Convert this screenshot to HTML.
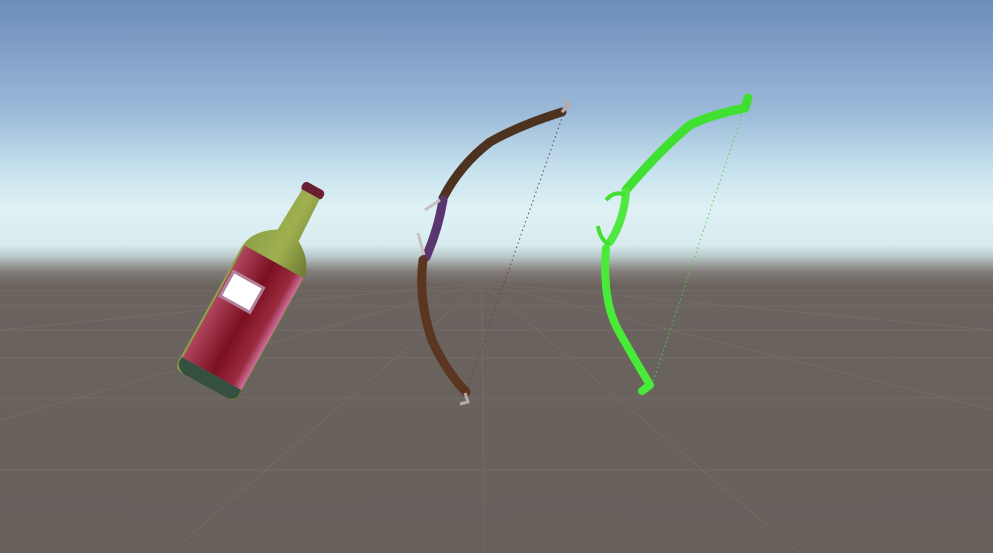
<!DOCTYPE html>
<html><head><meta charset="utf-8"><style>
html,body{margin:0;padding:0;width:993px;height:553px;overflow:hidden;background:#67605b}
</style></head><body>
<svg width="993" height="553" viewBox="0 0 993 553" xmlns="http://www.w3.org/2000/svg">
<defs>
<linearGradient id="sky" x1="0" y1="0" x2="0" y2="1">
<stop offset="0" stop-color="#6c8cba"/>
<stop offset="0.45" stop-color="#9ab9d8"/>
<stop offset="0.7" stop-color="#c8e3ee"/>
<stop offset="0.85" stop-color="#dff1f4"/>
<stop offset="1" stop-color="#d8ebee"/>
</linearGradient>
<linearGradient id="haze" x1="0" y1="0" x2="0" y2="1">
<stop offset="0" stop-color="#d8ebee"/>
<stop offset="0.3" stop-color="#b8c6c8"/>
<stop offset="0.65" stop-color="#847e7b"/>
<stop offset="1" stop-color="#6a635e"/>
</linearGradient>
<linearGradient id="ground" x1="0" y1="0" x2="0" y2="1">
<stop offset="0" stop-color="#6a635e"/>
<stop offset="1" stop-color="#68605b"/>
</linearGradient>
<linearGradient id="red" x1="0" y1="0" x2="1" y2="0">
<stop offset="0" stop-color="#b0465e"/>
<stop offset="0.5" stop-color="#7a1020"/>
<stop offset="0.85" stop-color="#9a2a3e"/>
<stop offset="1" stop-color="#d070a0"/>
</linearGradient>
<linearGradient id="green" x1="0" y1="0" x2="1" y2="0">
<stop offset="0" stop-color="#8ca048"/>
<stop offset="0.5" stop-color="#a0b050"/>
<stop offset="1" stop-color="#6a7a30"/>
</linearGradient>
</defs>
<rect x="0" y="0" width="993" height="246" fill="url(#sky)"/>
<rect x="0" y="245" width="993" height="40" fill="url(#haze)"/>
<rect x="0" y="284" width="993" height="269" fill="url(#ground)"/>
<g stroke="#7c7570" stroke-width="1" fill="none" opacity="0.5">
<line x1="0" y1="291" x2="993" y2="291"/>
<line x1="0" y1="306" x2="993" y2="306"/>
<line x1="0" y1="330" x2="993" y2="330"/>
<line x1="0" y1="358" x2="993" y2="358"/>
<line x1="0" y1="398" x2="993" y2="398"/>
<line x1="0" y1="470" x2="993" y2="470"/>
<line x1="482" y1="280" x2="484" y2="553"/>
<line x1="482" y1="283" x2="170" y2="553"/>
<line x1="482" y1="283" x2="800" y2="553"/>
<line x1="482" y1="283" x2="0" y2="420"/>
<line x1="482" y1="283" x2="993" y2="410"/>
<line x1="482" y1="283" x2="0" y2="330"/>
<line x1="482" y1="283" x2="993" y2="330"/>
</g>
<!-- bottle -->
<g transform="translate(260,286) rotate(29)">
<rect x="-12" y="-114" width="24" height="10" rx="4" fill="#6a2030"/>
<path d="M-10,-105 L10,-105 L12,-58 Q34,-45 35,-25 L35,104 Q35,114 25,114 L-25,114 Q-35,114 -35,104 L-35,-25 Q-34,-45 -12,-58 Z" fill="url(#green)"/>
<path d="M-33,-28 L34,-28 L34,100 L-33,100 Z" fill="url(#red)"/>
<path d="M-34,100 L34,100 L34,108 Q30,114 24,114 L-24,114 Q-32,112 -34,106 Z" fill="#355040"/>
<rect x="-30" y="0" width="34" height="28" fill="#fff" stroke="#b0809a" stroke-width="3"/>
</g>
<!-- brown bow string -->
<line x1="563" y1="115" x2="465" y2="395" stroke="#5a4650" stroke-width="1" stroke-dasharray="1.5 3"/>
<path d="M562,112 Q520,125 490,142 Q460,165 443,198" stroke="#4e3220" stroke-width="9" fill="none" stroke-linecap="round"/>
<path d="M443,200 Q438,230 426,257" stroke="#5a3670" stroke-width="9" fill="none" stroke-linecap="round"/>
<path d="M423,260 Q418,300 432,340 Q445,370 466,392" stroke="#5a3520" stroke-width="9" fill="none" stroke-linecap="round"/>
<path d="M562,112 L568,104 L564,100 L569,106 Z" stroke="#b8aaa8" stroke-width="3" fill="none"/>
<path d="M465,393 L468,402 L460,404" stroke="#b8aaa8" stroke-width="3" fill="none"/>
<path d="M440,200 L425,210" stroke="#c8c0c0" stroke-width="3"/>
<path d="M424,255 L418,233" stroke="#c8c0c0" stroke-width="3"/>
<!-- green bow -->
<line x1="742" y1="115" x2="652" y2="385" stroke="#4cd040" stroke-width="1" stroke-dasharray="1.5 3"/>
<path d="M748,98 L745,108 Q710,115 690,125 Q660,150 626,190" stroke="#40e030" stroke-width="9" fill="none" stroke-linecap="round" stroke-linejoin="round"/>
<path d="M626,192 Q624,220 610,242" stroke="#50e840" stroke-width="8" fill="none" stroke-linecap="round"/>
<path d="M606,248 Q602,300 618,330 Q635,360 650,385 L642,391" stroke="#48ec38" stroke-width="8" fill="none" stroke-linecap="round" stroke-linejoin="round"/>
<path d="M625,195 Q615,190 606,200" stroke="#40e030" stroke-width="4" fill="none"/>
<path d="M610,245 Q600,240 598,226" stroke="#40e030" stroke-width="4" fill="none"/>
</svg>
</body></html>
